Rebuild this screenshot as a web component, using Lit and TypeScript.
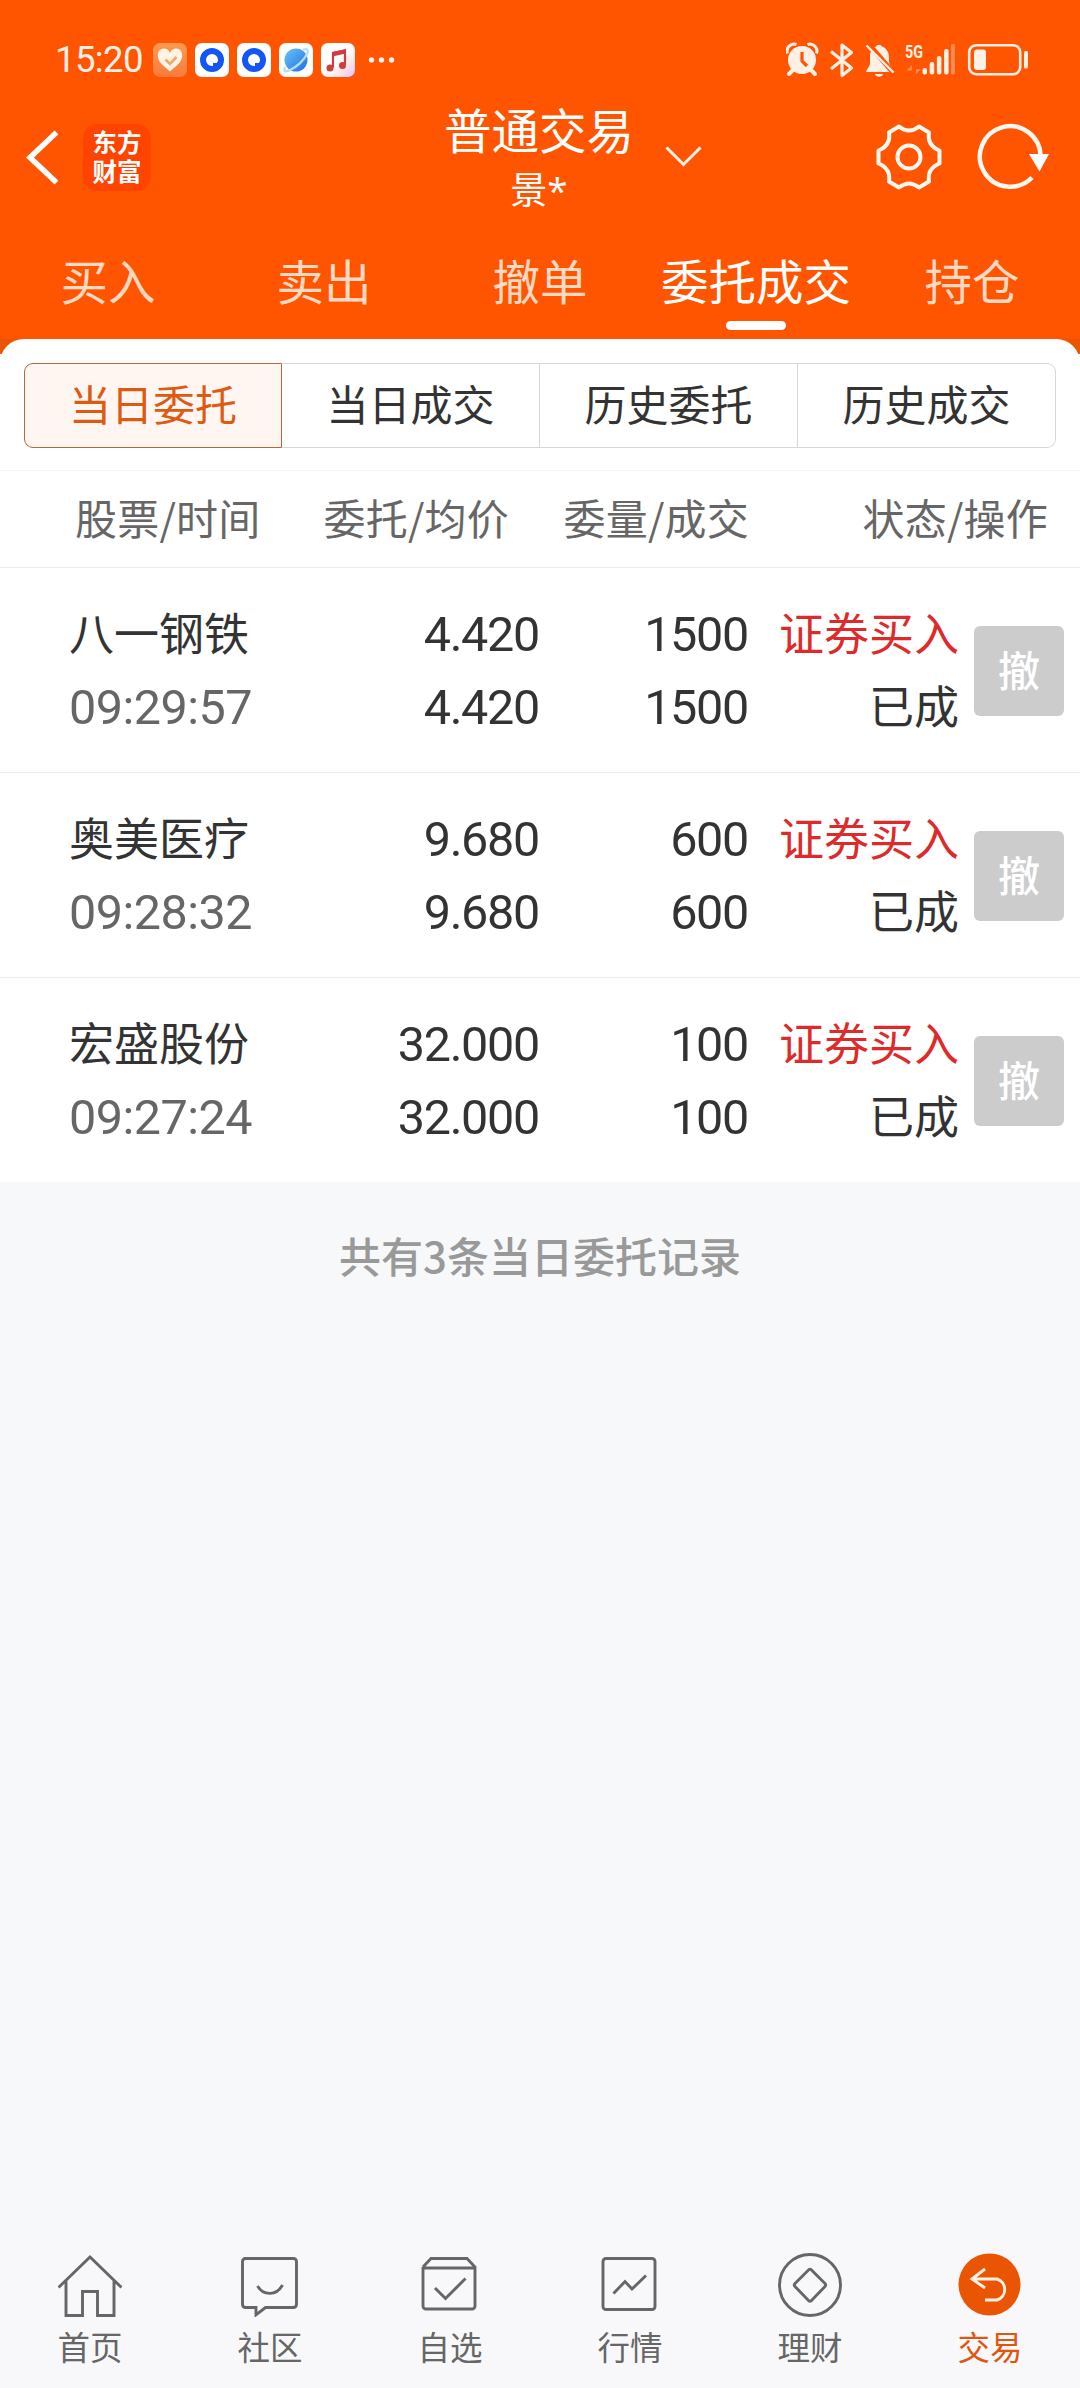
import { LitElement, html, css, svg } from "lit";
import { customElement } from "lit/decorators.js";
import { classMap } from "lit/directives/class-map.js";

interface Order {
  name: string;
  time: string;
  price: string;
  avg: string;
  amount: string;
  filled: string;
}

const ORDERS: Order[] = [
  { name: "八一钢铁", time: "09:29:57", price: "4.420", avg: "4.420", amount: "1500", filled: "1500" },
  { name: "奥美医疗", time: "09:28:32", price: "9.680", avg: "9.680", amount: "600", filled: "600" },
  { name: "宏盛股份", time: "09:27:24", price: "32.000", avg: "32.000", amount: "100", filled: "100" },
];

@customElement("status-bar")
export class StatusBar extends LitElement {
  static styles = css`
    :host { display: flex; align-items: center; height: 120px; box-sizing: border-box; padding: 0 52px 0 55px; color: #fff0e6; }
    .time { width: 98px; font: 400 36.5px/40px Roboto, sans-serif; letter-spacing: -0.6px; white-space: nowrap; }
    .apps { display: block; margin-top: 0; }
    .sys { display: block; margin-left: auto; }
    .net { font: 700 18px Roboto, sans-serif; }
  `;
  render() {
    const browser = (x: number) => svg`
      <g transform="translate(${x} 0)">
        <rect width="34" height="34" rx="7" fill="#fff"></rect>
        <circle cx="17" cy="17" r="9" fill="none" stroke="#1455f5" stroke-width="6"></circle>
        <path d="M17 17h6a6 6 0 0 1-6 6z" fill="#fff"></path>
        <path d="M18 24v-4h4l1-2 1 4-4 4z" fill="#1455f5"></path>
      </g>`;
    return html`
      <span class="time">15:20</span>
      <svg class="apps" width="246" height="34" viewBox="0 0 246 34">
        <defs>
          <linearGradient id="h" x1="0" y1="0" x2="0" y2="1"><stop offset="0" stop-color="#ff9a50"></stop><stop offset="1" stop-color="#fa7a3c"></stop></linearGradient>
          <linearGradient id="p" x1="0" y1="0" x2="1" y2="1"><stop offset="0" stop-color="#6cc4f8"></stop><stop offset="1" stop-color="#1d6fe0"></stop></linearGradient>
          <linearGradient id="m" x1="0" y1="0" x2="1" y2="1"><stop offset=".5" stop-color="#fff"></stop><stop offset=".75" stop-color="#fbe3e6"></stop><stop offset="1" stop-color="#dcbcff"></stop></linearGradient>
        </defs>
        <rect width="34" height="34" rx="7" fill="url(#h)"></rect>
        <path d="M17 28.500C12 24 5 19.500 5 13.500A6.200 6.200 0 0 1 17 10a6.200 6.200 0 0 1 12 3.500C29 19.500 22 24 17 28.500z" fill="#fff3e6"></path>
        <path d="M12.500 16.500l4.500 4.500 6.500-7" fill="none" stroke="#f0a868" stroke-width="2.600"></path>
        ${browser(42)} ${browser(84)}
        <g transform="translate(126 0)">
          <rect width="34" height="34" rx="7" fill="#fff"></rect>
          <circle cx="17" cy="17" r="11.500" fill="url(#p)"></circle>
          <path d="M6 24c-2 5 1 5 5 3 7-3 14-10 17-16 2-4 0-6-4-4" fill="none" stroke="#b9dcfb" stroke-width="2.400"></path>
        </g>
        <g transform="translate(168 0)">
          <rect width="34" height="34" rx="7" fill="url(#m)"></rect>
          <path d="M12 24.500V10l12-2.500v14" fill="none" stroke="#d23c3c" stroke-width="2.200"></path>
          <path d="M11.500 9l13.500-3v4.500l-13.500 3z" fill="#d23c3c"></path>
          <circle cx="9" cy="25" r="3.500" fill="#d23c3c"></circle><circle cx="21.500" cy="22.500" r="3.500" fill="#d23c3c"></circle>
        </g>
        <g fill="#fff0e6"><circle cx="218.500" cy="17" r="2.700"></circle><circle cx="228.500" cy="17" r="2.700"></circle><circle cx="238.500" cy="17" r="2.700"></circle></g>
      </svg>
      <svg class="sys" width="242" height="38" viewBox="786 41 242 38" fill="#fff0e6">
        <circle cx="802" cy="60" r="14"></circle>
        <path d="M793 70l-4 4M811 70l4 4" stroke="#fff0e6" stroke-width="4" stroke-linecap="round"></path>
        <path d="M787.500 53.500a7 7 0 0 1 9-9M816.500 53.500a7 7 0 0 0-9-9" fill="none" stroke="#fff0e6" stroke-width="3"></path>
        <path d="M802 52v9l5 5" fill="none" stroke="#ff5500" stroke-width="3.200"></path>
        <path d="M831 51.500l20.500 16.500L842 75.500V45l9.500 7.500L831 69" fill="none" stroke="#fff0e6" stroke-width="3.200" stroke-linejoin="round"></path>
        <path d="M876 46.500a3.500 3.500 0 0 1 6 0c5 2 7 6 7 11v4c0 3 2 5 3 6.500 1 2-.500 4-2.500 4H866c1-4 4-5 4-9v-7c0-4 2-8 6-9.500zM875 74h8c-1 3.500-7 3.500-8 0z"></path>
        <path d="M869 44.500l25 29" stroke="#ff5500" stroke-width="5"></path>
        <path d="M866.500 45.500l27 27" stroke="#fff0e6" stroke-width="2.400"></path>
        <text class="net" x="905" y="57.500" textLength="18" lengthAdjust="spacingAndGlyphs">5G</text>
        <path d="M912 74V65l-5.500 5.500h5.500zM916 65v9l5-5h-5z" opacity=".35"></path>
        <rect x="922.500" y="68" width="4.500" height="6.500" rx="2"></rect>
        <rect x="929.700" y="62" width="4.500" height="12.500" rx="2"></rect>
        <rect x="936.900" y="56" width="4.500" height="18.500" rx="2"></rect>
        <rect x="944.100" y="49" width="4.500" height="25.500" rx="2"></rect>
        <rect x="951" y="44" width="4" height="30.500" rx="1.500" opacity=".35"></rect>
        <rect x="969.200" y="45.200" width="51" height="29" rx="7" fill="none" stroke="#fff0e6" stroke-width="2.600"></rect>
        <rect x="974" y="49.500" width="12" height="20.500" rx="3"></rect>
        <rect x="1024" y="51" width="4" height="17.500" rx="1.500"></rect>
      </svg>`;
  }
}

@customElement("app-header")
export class AppHeader extends LitElement {
  static styles = css`
    :host { display: block; color: #fff; font-family: "Noto Sans CJK SC", sans-serif; }
    .bar { display: grid; grid-template-columns: 26px 32px 25px 68px 1fr auto; height: 110px; padding-right: 29px; }
    svg { display: block; }
    .back { margin-top: 10px; grid-column: 2; }
    .logo { grid-column: 4; margin-top: 4px; width: 68px; height: 67px; box-sizing: border-box; padding-top: 3px; border-radius: 14px; background: #ff4400; font-weight: 700; font-size: 24.500px; line-height: 29px; text-align: center; }
    .logo span { display: block; }
    .mid { grid-column: 5; display: flex; width: 778px; margin-right: -600px; }
    .titles { width: 190px; margin-left: 293px; text-align: center; white-space: nowrap; margin-top: -24px; }
    .title { font-size: 47.500px; line-height: 66px; }
    .user { font-size: 37px; line-height: 52px; }
    .star { font-family: "Open Sans", sans-serif; }
    .chev { margin: 22px 0 0 29px; }
    .tools { grid-column: 6; display: flex; gap: 34px; margin-top: 3px; }
    .tabs { display: grid; grid-template-columns: repeat(5, 1fr); height: 109px; }
    .tab { display: flex; flex-direction: column; align-items: center; font-size: 47.500px; line-height: 66px; padding-top: 17px; color: #ffd9c2; }
    .on { color: #fff; }
    .mark { width: 60px; height: 9px; border-radius: 5px; background: #fff; margin-top: 8px; }
  `;
  render() {
    const tabs = ["买入", "卖出", "撤单", "委托成交", "持仓"];
    return html`
      <div class="bar">
        <svg class="back" width="32" height="56" viewBox="0 0 32 56"><path d="M30.500 2.500L4 27.500l26.500 25" fill="none" stroke="#fff" stroke-width="5.500"></path></svg>
        <div class="logo"><span>东方</span><span>财富</span></div>
        <div class="mid">
          <div class="titles">
            <div class="title">普通交易</div>
            <div class="user">景<span class="star">*</span></div>
          </div>
          <svg class="chev" width="40" height="26" viewBox="0 0 40 26"><path d="M3.500 5.500l17 17 17-17" fill="none" stroke="#fff3eb" stroke-width="3"></path></svg>
        </div>
        <div class="tools">
          <svg width="68" height="68" viewBox="-34 -34 68 68" fill="none" stroke="#fff6f0" stroke-width="4">
            <path d="M-10 -30.500Q0 -22.500 10 -30.500L20 -24.500Q18 -11.500 30.500 -6.500V6.500Q18 11.500 20 24.500L10 30.500Q0 22.500 -10 30.500L-20 24.500Q-18 11.500 -30.500 6.500V-6.500Q-18 -11.500 -20 -24.500Z" stroke-linejoin="round"></path>
            <circle r="11.500"></circle>
          </svg>
          <svg width="74" height="68" viewBox="978 123 74 68">
            <path d="M1041.500 156A30.300 30.300 0 1 0 1033 177.500" fill="none" stroke="#fff6f0" stroke-width="4.500"></path>
            <path d="M1030 154h20l-9.500 17.500z" fill="#fff"></path>
          </svg>
        </div>
      </div>
      <div class="tabs">
        ${tabs.map((t) => {
          const on = t === "委托成交";
          return html`<div class=${classMap({ tab: true, on })}>${t}${on ? html`<span class="mark"></span>` : ""}</div>`;
        })}
      </div>`;
  }
}

@customElement("order-row")
export class OrderRow extends LitElement {
  static properties = { order: { attribute: false } };
  declare order: Order;
  static styles = css`
    :host { display: grid; grid-template-columns: 230px 240px 209px 211px 90px; height: 205px; box-sizing: border-box; padding-left: 69px; background: #fff; border-bottom: 1px solid #ececec; color: #333; font-family: "Noto Sans CJK SC", sans-serif; font-size: 45px; line-height: 73px; white-space: nowrap; }
    .cell { padding-top: 27px; }
    .right { text-align: right; }
    .num { font-family: Roboto, sans-serif; font-size: 48.500px; letter-spacing: -1.300px; padding-top: 30px; }
    .time { font-family: Roboto, sans-serif; font-size: 48.500px; letter-spacing: -0.500px; color: #666; padding-top: 3px; }
    .buy { color: #dd2a2a; }
    .cancel { margin: 58px 0 0 15px; width: 90px; height: 90px; border-radius: 6px; background: #ccc; color: #fff; font-size: 42px; font-weight: 500; line-height: 86px; text-align: center; }
  `;
  render() {
    const o = this.order;
    return html`
      <div class="cell"><div>${o.name}</div><div class="time">${o.time}</div></div>
      <div class="cell right num"><div>${o.price}</div><div>${o.avg}</div></div>
      <div class="cell right num"><div>${o.amount}</div><div>${o.filled}</div></div>
      <div class="cell right"><div class="buy">证券买入</div><div>已成</div></div>
      <div class="cancel">撤</div>`;
  }
}

@customElement("bottom-nav")
export class BottomNav extends LitElement {
  static styles = css`
    :host { display: grid; grid-template-columns: repeat(6, 1fr); height: 154px; box-sizing: border-box; padding-top: 19px; background: #f8f8fa; color: #666; font-family: "Noto Sans CJK SC", sans-serif; }
    .item { display: flex; flex-direction: column; align-items: center; font-size: 32.500px; line-height: 44px; }
    .icon { display: block; margin-bottom: 7px; }
    .on { color: #e0560f; }
  `;
  render() {
    const items = [
      { t: "首页", i: svg`<path d="M0.500 34.500L32 4l31.500 30.500M8 28v34.500h16.500V38.500h15V62.500H56V28"></path>` },
      { t: "社区", i: svg`<path d="M6 5.500h49.500a3 3 0 0 1 3 3v43a3 3 0 0 1-3 3H27.500L18 61.800V54.500H7.500a3 3 0 0 1-3-3v-43a3 3 0 0 1 3-3zM19.500 33c6 10 19 10 25-1"></path>` },
      { t: "自选", i: svg`<path d="M5 14v39a3 3 0 0 0 3 3h46a3 3 0 0 0 3-3V14l-8-8.500H13L5 14M5 15h52M17 35l10.500 10.500L47.500 25.500"></path>` },
      { t: "行情", i: svg`<rect x="5" y="5.500" width="52" height="51" rx="3"></rect><path d="M15.500 40.500L27 28.500l7 7.500 14-13.500"></path>` },
      { t: "理财", i: svg`<circle cx="32" cy="32" r="30.500"></circle><path d="M30.500 17q1.500-1.500 3 0l13.500 13.500q1.500 1.500 0 3L33.500 47.500q-1.500 1.500-3 0L17 33.500q-1.500-1.500 0-3z"></path>` },
      { t: "交易", i: svg`<circle cx="31.500" cy="31.500" r="31" fill="#ea5504" stroke="none"></circle><path d="M27 16L14 26l13 9M15 26h24a11 11 0 0 1 0 21H27" stroke="#fff0e4"></path>` },
    ];
    return html`${items.map(
      ({ t, i }) => html`<div class=${classMap({ item: true, on: t === "交易" })}>
        <svg class="icon" width="64" height="64" viewBox="0 0 64 64" fill="none" stroke="#666" stroke-width="2.900">${i}</svg>${t}
      </div>`
    )}`;
  }
}

@customElement("app-root")
export class AppRoot extends LitElement {
  static styles = css`
    :host { display: flex; flex-direction: column; height: 2388px; overflow: hidden; background: #f6f8fa; font-family: "Noto Sans CJK SC", sans-serif; }
    .top { background: #ff5500; }
    .sheet { background: linear-gradient(#ea5504 15px, #fff 15px); }
    .panel { background: #fff; border-radius: 24px 24px 0 0; height: 132px; box-sizing: border-box; padding: 24px 24px 0; border-bottom: 1px solid #f5f5f5; }
    .seg { display: grid; grid-template-columns: repeat(4, 1fr); height: 85px; }
    .opt { border: 1px solid #d5d8d8; border-left-width: 0; box-sizing: border-box; text-align: center; font-size: 42px; line-height: 78px; color: #333; background: #fff; white-space: nowrap; }
    .opt:last-child { border-radius: 0 9px 9px 0; }
    .opt.on { border: 1px solid #b5683a; border-radius: 9px 0 0 9px; background: #fff6f2; color: #dc5a12; }
    .cols { display: grid; grid-template-columns: 200px 234px 240px 299px; height: 97px; box-sizing: border-box; padding-left: 75px; background: #fff; border-bottom: 1px solid #ececec; color: #666; font-size: 42px; letter-spacing: 0.200px; line-height: 92px; text-align: right; white-space: nowrap; }
    .first { text-align: left; }
    .total { padding-top: 43px; text-align: center; font-size: 42px; font-weight: 500; line-height: 60px; color: #999; }
    .last { height: 204px; border-bottom: 0; }
    .nav { margin-top: auto; }
  `;
  render() {
    return html`
      <div class="top"><status-bar></status-bar><app-header></app-header></div>
      <div class="sheet">
        <div class="panel">
          <div class="seg">
            <div class="opt on">当日委托</div>
            <div class="opt">当日成交</div>
            <div class="opt">历史委托</div>
            <div class="opt">历史成交</div>
          </div>
        </div>
      </div>
      <div class="cols"><span class="first">股票/时间</span><span>委托/均价</span><span>委量/成交</span><span>状态/操作</span></div>
      ${ORDERS.map((o, i) => html`<order-row class=${classMap({ last: i === ORDERS.length - 1 })} .order=${o}></order-row>`)}
      <div class="total">共有3条当日委托记录</div>
      <bottom-nav class="nav"></bottom-nav>`;
  }
}
